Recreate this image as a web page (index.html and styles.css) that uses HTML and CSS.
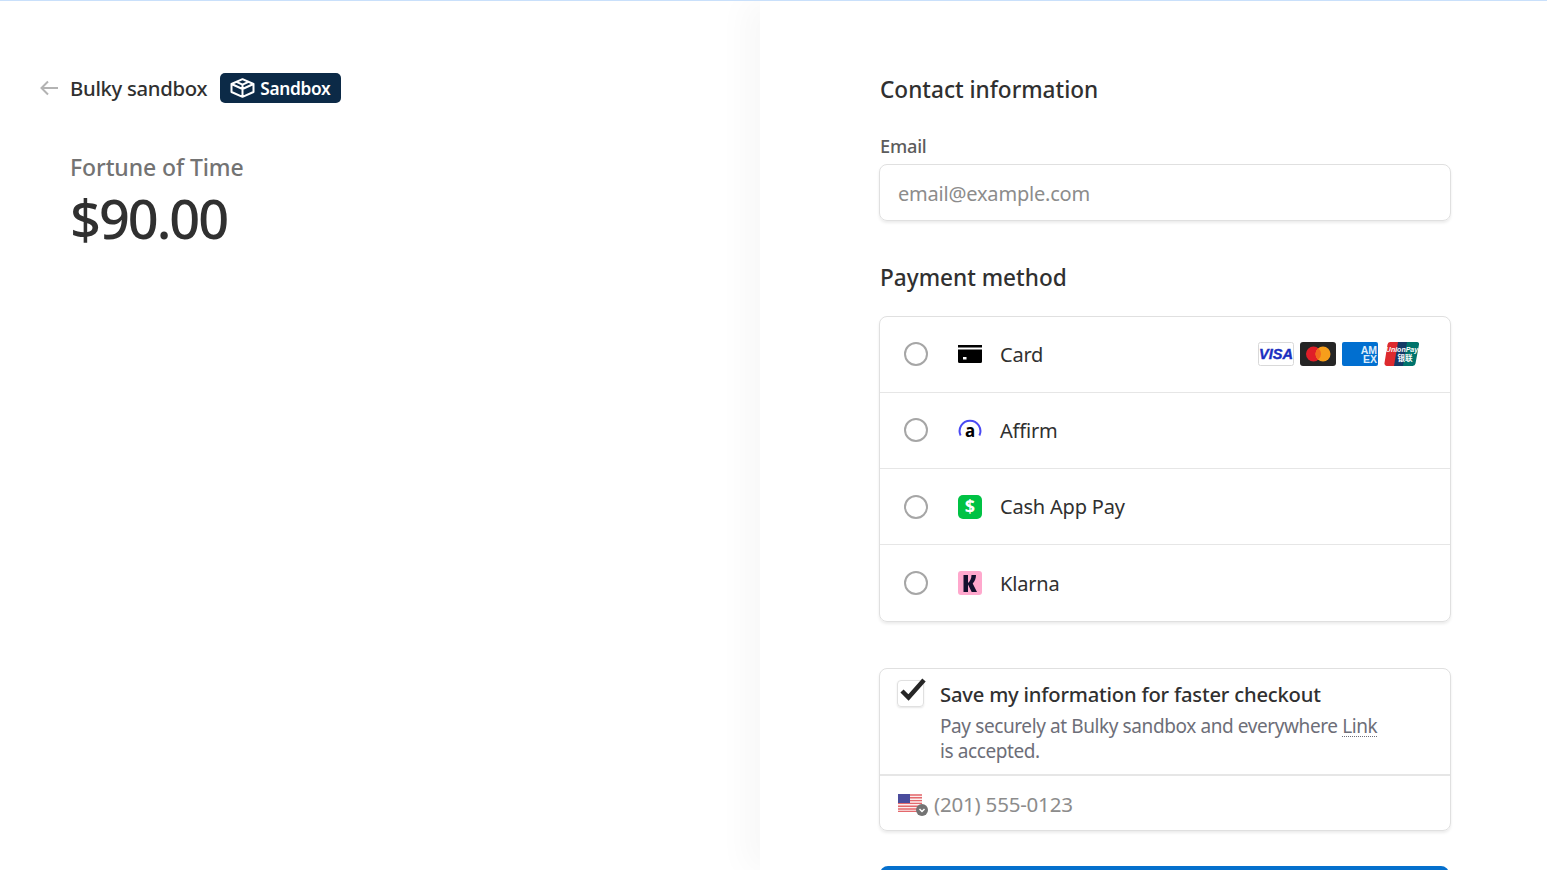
FILE: index.html
```html
<!DOCTYPE html>
<html>

<head>
    <title>Checkout</title>
    <link rel="stylesheet" href="styles.css">
</head>

<body>
    <div class="page">
        <div class="summary">
            <div class="merchant">
                <svg class="back" width="20" height="16" viewBox="0 0 20 16"><path d="M19 8H2.500M9 1.500 2.500 8 9 14.500" fill="none" stroke="#b3b3b3" stroke-width="2"/></svg>
                <span class="merchant-name">Bulky sandbox</span>
                <span class="badge">
                    <svg width="25" height="20" viewBox="0 0 25 20"><path d="M12.500 1.200 23.500 6v8l-11 4.800L1.500 14V6zM1.500 6l11 5 11-5M6.500 3.800l6 2.900 6-2.900M12.500 6.700V11M12.500 11v7.800" fill="none" stroke="#fff" stroke-width="2" stroke-linejoin="round"/></svg>
                    Sandbox
                </span>
            </div>
            <div class="product">Fortune of Time</div>
            <div class="price">$90.00</div>
        </div>

        <div class="checkout">
            <h2 class="heading">Contact information</h2>
            <label class="field-label">Email</label>
            <div class="email-box">email@example.com</div>

            <h2 class="heading payment-heading">Payment method</h2>
            <div class="methods">
                <div class="method method-up">
                    <span class="radio"></span>
                    <svg class="method-icon" width="24" height="24" viewBox="0 0 24 24"><path d="M0 3h24v2.500H0zM0 7.500h24v12a1.500 1.500 0 0 1-1.500 1.500h-21A1.500 1.500 0 0 1 0 19.500z" fill="#000"/><rect x="5" y="15" width="3.500" height="2.500" fill="#fff"/></svg>
                    <span class="method-name">Card</span>
                    <span class="brands">
                        <svg width="36" height="24" viewBox="0 0 36 24"><rect x=".5" y=".5" width="35" height="23" rx="2" fill="#fff" stroke="#d9d9d9"/><text x="18" y="17" class="visa-text">VISA</text></svg>
                        <svg width="36" height="24" viewBox="0 0 36 24"><rect width="36" height="24" rx="3" fill="#252525"/><circle cx="13.500" cy="12" r="7.500" fill="#e01e28"/><circle cx="23" cy="12" r="7.500" fill="#f79e1b"/><path d="M18.250 6.200a7.500 7.500 0 0 1 0 11.600 7.500 7.500 0 0 1 0-11.600z" fill="#f26a1e"/></svg>
                        <svg width="36" height="24" viewBox="0 0 36 24"><rect width="36" height="24" rx="2" fill="#016fd0"/><text x="35" y="12" class="amex-text">AM</text><text x="35" y="21" class="amex-text">EX</text></svg>
                        <svg width="35" height="24" viewBox="0 0 35 24"><path d="M6 0h10l-4 24H3a2.500 2.500 0 0 1-2.500-3L3.500 2.500A3 3 0 0 1 6 0z" fill="#dd2a2e"/><path d="M14 0h11l-4 24H10z" fill="#143a66"/><path d="M23 0h10a2 2 0 0 1 2 2.500L31.500 21.500a3 3 0 0 1-3 2.500H19z" fill="#00736b"/><text x="18" y="10" class="union-text">UnionPay</text><text x="21" y="19" class="union-cjk">银联</text></svg>
                    </span>
                </div>
                <div class="method method-up">
                    <span class="radio"></span>
                    <svg class="method-icon" width="24" height="24" viewBox="0 0 24 24"><path d="M2.600 17.500A10.400 10.400 0 1 1 21.400 17.500" fill="none" stroke="#4a4af4" stroke-width="2"/><text x="12" y="18.500" class="affirm-text">a</text></svg>
                    <span class="method-name">Affirm</span>
                </div>
                <div class="method">
                    <span class="radio"></span>
                    <svg class="method-icon" width="24" height="24" viewBox="0 0 24 24"><rect width="24" height="24" rx="5" fill="#00c244"/><text x="12" y="18" class="cash-text">$</text></svg>
                    <span class="method-name">Cash App Pay</span>
                </div>
                <div class="method method-last">
                    <span class="radio"></span>
                    <svg class="method-icon" width="24" height="24" viewBox="0 0 24 24"><rect width="24" height="24" rx="3" fill="#ffa8cd"/><path d="M5.500 4H10v17H5.500zM18 4h-4.500c0 3.500-1.300 6-3.500 8v1.500L13.700 21H19l-4.300-8.500C16.800 10.300 18 7.500 18 4z" fill="#14102e"/></svg>
                    <span class="method-name">Klarna</span>
                </div>
            </div>

            <div class="save-box">
                <div class="save-top">
                    <span class="checkbox">
                        <svg class="tick" width="30" height="26" viewBox="0 0 30 26"><path d="M4 13 10.500 19.500 26 2" fill="none" stroke="#262626" stroke-width="4.500"/></svg>
                    </span>
                    <div class="save-text">
                        <div class="save-title">Save my information for faster checkout</div>
                        <div class="save-desc">Pay securely at Bulky sandbox and everywhere <span class="link-word">Link</span> is accepted.</div>
                    </div>
                </div>
                <div class="phone-row">
                    <span class="flag">
                        <svg width="24" height="18" viewBox="0 0 24 18"><rect width="24" height="18" rx="2" fill="#fbeeee"/><path d="M0 1h24M0 3.800h24M0 6.600h24M0 9.400h24M0 12.200h24M0 15h24M0 17.500h24" stroke="#e4686c" stroke-width="1.400"/><rect width="12" height="9" fill="#4a4c9c"/></svg>
                        <svg class="flag-arrow" width="12" height="12" viewBox="0 0 12 12"><circle cx="6" cy="6" r="6" fill="#737373"/><path d="M3.500 5 6 7.500 8.500 5" fill="none" stroke="#fff" stroke-width="1.500"/></svg>
                    </span>
                    <span class="phone-text">(201) 555-0123</span>
                </div>
            </div>

            <div class="pay-button"></div>
        </div>
    </div>
</body>

</html>
```

FILE: styles.css
```css
html, body {
    margin: 0;
    padding: 0;
    height: 870px;
    overflow: hidden;
    background: #fff;
}

body {
    font-family: "Noto Sans", "Open Sans", Arial, sans-serif;
    color: #303030;
}

.page {
    display: flex;
    height: 869px;
    border-top: 1px solid #c9e0fb;
    overflow: hidden;
}

.summary {
    width: 760px;
    flex: none;
    box-sizing: border-box;
    padding: 72px 0 0 39px;
}

.merchant {
    display: flex;
    align-items: center;
    height: 30px;
}

.back {
    margin-right: 11px;
}

.merchant-name {
    font-size: 20.300px;
    font-weight: 500;
    letter-spacing: -0.3px;
    margin-right: 13px;
}

.badge {
    display: flex;
    align-items: center;
    gap: 5px;
    height: 30px;
    padding: 0 10.500px 0 10px;
    background: #0c2a47;
    border-radius: 5px;
    color: #fff;
    font-size: 17.300px;
    font-weight: 600;
    letter-spacing: -0.3px;
}

.product {
    margin: 49px 0 0 31px;
    font-size: 23px;
    font-weight: 500;
    line-height: 30px;
    letter-spacing: -0.1px;
    color: #737373;
}

.price {
    margin: 3px 0 0 31px;
    font-size: 54px;
    font-weight: 500;
    line-height: 66px;
    letter-spacing: -2px;
    color: #303030;
}

.checkout {
    flex: 1;
    box-sizing: border-box;
    padding: 72px 0 0 120px;
    box-shadow: -15px 0 30px rgba(0, 0, 0, 0.03);
}

.heading {
    margin: 0;
    width: 570px;
    font-size: 22.600px;
    font-weight: 500;
    line-height: 34px;
    color: #303030;
}

.field-label {
    display: block;
    margin-top: 27px;
    font-size: 18.200px;
    font-weight: 500;
    line-height: 24px;
    letter-spacing: -0.2px;
    color: #5c5c5c;
}

.email-box {
    width: 570px;
    height: 55px;
    margin: 6px 0 0 -1px;
    border: 1px solid #e0e0e0;
    border-radius: 8px;
    box-shadow: 0 2px 3px rgba(0, 0, 0, 0.08);
    font-size: 20px;
    line-height: 57px;
    text-indent: 18px;
    letter-spacing: -0.2px;
    color: #8c8c8c;
}

.payment-heading {
    margin-top: 40px;
}

.methods {
    width: 570px;
    margin: 21px 0 0 -1px;
    border: 1px solid #e0e0e0;
    border-radius: 8px;
    box-shadow: 0 2px 3px rgba(0, 0, 0, 0.08);
}

.method {
    display: flex;
    align-items: center;
    height: 75px;
    padding-left: 24px;
    border-bottom: 1px solid #e6e6e6;
}

.method-up {
    height: 73px;
    padding-bottom: 2px;
}

.method-up .method-name {
    margin-top: 2px;
}

.method-last {
    height: 76px;
    border-bottom: none;
}

.radio {
    width: 20px;
    height: 20px;
    border: 2px solid #a6a6a6;
    border-radius: 50%;
    margin-right: 30px;
    flex: none;
}

.method-icon {
    margin-right: 18px;
    flex: none;
}

.method-name {
    font-size: 20px;
    letter-spacing: -0.2px;
    color: #303030;
}

.brands {
    display: flex;
    gap: 6px;
    margin-left: auto;
    margin-right: 31px;
}

.visa-text {
    font: italic 700 14.500px "Liberation Sans", sans-serif;
    stroke: #1a2fc0;
    stroke-width: 0.4px;
    fill: #1a2fc0;
    text-anchor: middle;
}

.amex-text {
    font: 700 10.500px "Liberation Sans", sans-serif;
    fill: #dcecfa;
    text-anchor: end;
}

.union-text {
    font: italic 700 7px "Liberation Sans", sans-serif;
    fill: #fff;
    text-anchor: middle;
}

.union-cjk {
    font: 700 7.500px "Noto Sans CJK SC", sans-serif;
    fill: #fff;
    text-anchor: middle;
}

.affirm-text {
    font: 700 17px "Noto Sans", sans-serif;
    fill: #000;
    text-anchor: middle;
}

.cash-text {
    font: 700 18px "Noto Sans", sans-serif;
    fill: #fff;
    text-anchor: middle;
}

.save-box {
    width: 570px;
    margin: 46px 0 0 -1px;
    border: 1px solid #e0e0e0;
    border-radius: 8px;
    box-shadow: 0 2px 3px rgba(0, 0, 0, 0.08);
}

.save-top {
    display: flex;
    height: 107px;
    box-sizing: border-box;
    padding: 10px 20px 0 17px;
    border-bottom: 2px solid #e6e6e6;
}

.checkbox {
    position: relative;
    flex: none;
    width: 25px;
    height: 25px;
    margin: 1px 16px 0 0;
    border: 1px solid #e0e0e0;
    border-radius: 4px;
    box-shadow: 0 1px 2px rgba(0, 0, 0, 0.1);
}

.tick {
    position: absolute;
    left: 0;
    top: -3px;
}

.save-title {
    font-size: 20.200px;
    font-weight: 500;
    line-height: 30px;
    letter-spacing: -0.2px;
    color: #303030;
}

.save-desc {
    width: 445px;
    margin-top: 5px;
    font-size: 19px;
    line-height: 25px;
    letter-spacing: -0.4px;
    color: #6d6e78;
}

.link-word {
    text-decoration: underline dotted 1px;
    text-underline-offset: 3px;
}

.phone-row {
    display: flex;
    align-items: center;
    height: 52px;
    padding: 2px 0 0 18px;
}

.flag {
    position: relative;
    display: block;
    width: 24px;
    height: 18px;
    margin-right: 12px;
    margin-top: -3px;
}

.flag-arrow {
    position: absolute;
    right: -6px;
    bottom: -4px;
}

.phone-text {
    font-size: 20.500px;
    letter-spacing: -0.2px;
    color: #8c8c8c;
}

.pay-button {
    width: 569px;
    height: 60px;
    margin-top: 35px;
    background: #0570cd;
    border-radius: 8px;
}
```
